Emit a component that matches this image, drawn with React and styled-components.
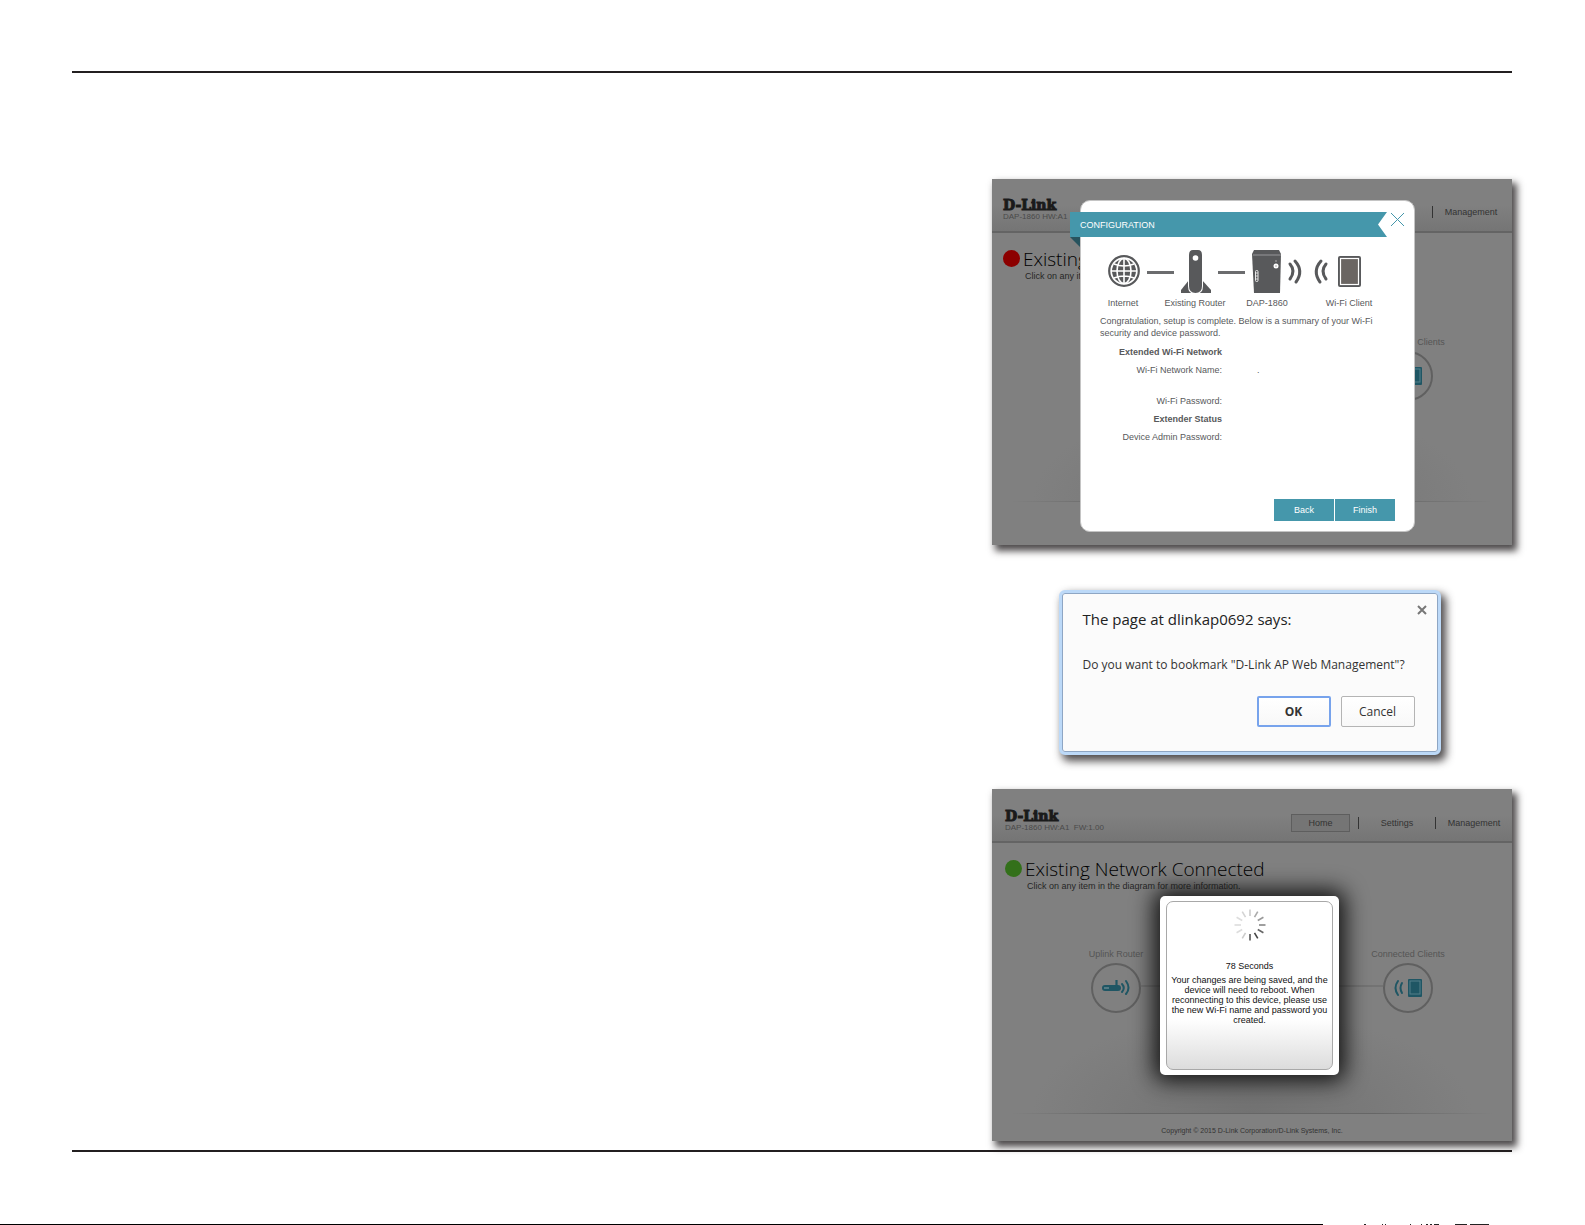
import React from "react";
import styled, { createGlobalStyle } from "styled-components";

const teal = "#4597ab";
const ui = `"Liberation Sans", Arial, sans-serif`;

const GlobalStyle = createGlobalStyle`
  *, *::before, *::after { box-sizing: border-box; }
  body { margin: 0; background: #fff; font-family: ${ui}; }
  h1, h2, p, dl, dd { margin: 0; }
  button { font: inherit; cursor: pointer; }
`;

const Page = styled.div`
  min-height: 100vh;
  display: flex;
  flex-direction: column;
`;

const Sheet = styled.main`
  margin: 71px 73px 0 72px;
  padding: 106px 0 9px;
  border-top: 2px solid #231f20;
  border-bottom: 2px solid #231f20;
  display: flex;
  flex-direction: column;
  align-items: flex-end;
`;

const Figures = styled.div`
  width: 520px;
  display: flex;
  flex-direction: column;
  align-items: center;
`;

const Screen = styled.section`
  position: relative;
  width: 100%;
  height: ${(p) => p.$height}px;
  display: flex;
  flex-direction: column;
  background: radial-gradient(ellipse 220px 100px at 50% 100%, #727272, #808080) top / 100%
    calc(100% - ${(p) => p.$footer}px) no-repeat #808080;
  box-shadow: 4px 5px 7px 1px rgba(35, 31, 32, 0.8);
  color: #333;
  font-size: 9px;
`;

const TopBar = styled.header`
  flex: none;
  height: 54px;
  padding: 0 ${(p) => p.$end}px 0 ${(p) => p.$inset}px;
  display: flex;
  justify-content: space-between;
  background: linear-gradient(#808080 50%, #757575);
  border-bottom: 2px solid #646464;
`;

const Brand = styled.div`
  padding-top: ${(p) => p.$top}px;
`;

const Logo = styled.div`
  font: bold 14px/14px "DejaVu Serif", serif;
  color: #1a1a1a;
  -webkit-text-stroke: 1px #1a1a1a;
`;

const Model = styled.div`
  font-size: 8px;
  line-height: 10px;
  color: #4a4a4a;
`;

const Nav = styled.nav`
  display: flex;
  align-items: center;
  align-self: flex-start;
  height: 18px;
  margin-top: ${(p) => p.$top}px;
`;

const NavLink = styled.a`
  width: ${(p) => p.$width}px;
  height: 18px;
  line-height: 16px;
  text-align: center;
  text-decoration: none;
  color: #333;
  border: 1px solid ${(p) => (p.$active ? "#5e5e5e" : "transparent")};
  background: ${(p) => (p.$active ? "#757575" : "transparent")};
`;

const Divider = styled.span`
  width: 1px;
  height: 12px;
  margin-left: ${(p) => p.$gap || 0}px;
  background: #333;
`;

const Heading = styled.div`
  display: grid;
  grid-template-columns: 17px 1fr;
  column-gap: 3px;
  padding: 14px 0 0 ${(p) => p.$inset}px;
`;

const Dot = styled.span`
  width: 17px;
  height: 17px;
  margin-top: 3px;
  border-radius: 50%;
  background: ${(p) => p.$color};
`;

const Title = styled.h1`
  font: 300 19px/24px "Open Sans", "Noto Sans", sans-serif;
  color: #000;
`;

const Hint = styled.p`
  grid-column: 2;
  padding-left: 2px;
  line-height: 10px;
  color: #262626;
`;

const Diagram = styled.div`
  display: flex;
  justify-content: space-between;
  margin: ${(p) => p.$top}px 67px 0 87px;
`;

const Node = styled.div`
  width: 74px;
  display: flex;
  flex-direction: column;
  align-items: center;
  gap: 3px;
  line-height: 12px;
  color: #555;
  white-space: nowrap;
`;

const Ring = styled.div`
  width: 50px;
  height: 50px;
  display: grid;
  place-items: center;
  border: 2px solid #606060;
  border-radius: 50%;
`;

const Wire = styled.div`
  flex: 1;
  height: 2px;
  margin: 37px -12px 0;
  background: #737373;
`;

const Footer = styled.footer`
  height: ${(p) => p.$height}px;
  margin: auto 20px 0;
  padding-top: 12px;
  text-align: center;
  font-size: 7px;
  line-height: 10px;
  border-top: 1px solid;
  border-image: linear-gradient(90deg, transparent, #666 25%, #666 75%, transparent) 1;
`;

const SetupDialog = styled.div`
  position: absolute;
  left: 88px;
  top: 21px;
  width: 335px;
  height: 332px;
  padding: 11px 19px 10px;
  display: flex;
  flex-direction: column;
  background: #fff;
  border: 1px solid #c4c4c4;
  border-radius: 10px;
  color: #58595b;
`;

const Ribbon = styled.h2`
  flex: none;
  width: 317px;
  height: 25px;
  margin-left: -30px;
  padding-left: 10px;
  font-size: 9px;
  font-weight: 400;
  line-height: 27px;
  color: #fff;
  background: ${teal};
  clip-path: polygon(0 0, 100% 0, calc(100% - 9px) 50%, 100% 100%, 0 100%);
`;

const Fold = styled.span`
  position: absolute;
  left: -11px;
  top: 36px;
  width: 10px;
  height: 10px;
  background: #27535e;
  clip-path: polygon(0 0, 100% 0, 100% 100%);
`;

const CloseButton = styled.button`
  position: absolute;
  top: ${(p) => p.$top}px;
  right: ${(p) => p.$right}px;
  padding: 0;
  border: 0;
  background: none;
  display: flex;
`;

const Art = styled.svg`
  display: block;
  flex: none;
`;

const Topology = styled.div`
  margin: 12px -12px 0;
  padding-left: 19px;
`;

const Captions = styled.div`
  display: grid;
  grid-template-columns: 72px 72px 72px 92px;
  margin: 2px 0 0 -20px;
  line-height: 12px;
  text-align: center;
`;

const Summary = styled.p`
  margin-top: 6px;
  line-height: 12px;
`;

const Details = styled.dl`
  display: grid;
  grid-template-columns: 122px 1fr;
  column-gap: 35px;
  margin-top: 4px;
  line-height: 18px;
`;

const Term = styled.dt`
  text-align: right;
  font-weight: ${(p) => (p.$bold ? 700 : 400)};
  margin-top: ${(p) => (p.$gap ? 13 : 0)}px;
`;

const Actions = styled.div`
  display: flex;
  justify-content: flex-end;
  gap: ${(p) => p.$gap}px;
  margin-top: auto;
`;

const TealButton = styled.button`
  width: 60px;
  height: 22px;
  padding: 0;
  border: 0;
  color: #fff;
  background: ${teal};
`;

const Alert = styled.section`
  position: relative;
  width: 382px;
  height: 165px;
  margin: 45px 5px 34px 0;
  padding: 16px 23px 25px 21px;
  display: flex;
  flex-direction: column;
  background: #fbfbfb;
  border: 3px solid #bcd9f8;
  border-radius: 6px;
  box-shadow: inset 0 0 0 1px #8ea6c4, 4px 5px 8px 1px rgba(35, 31, 32, 0.8);
  color: #333;
  font: 12px/16px "Open Sans", "Noto Sans", sans-serif;
`;

const AlertTitle = styled.h2`
  font-size: 15px;
  font-weight: 400;
  line-height: 20px;
  color: #222;
`;

const AlertText = styled.p`
  margin-top: 28px;
  white-space: nowrap;
`;

const AlertButton = styled.button`
  width: 74px;
  height: 31px;
  padding: 0;
  color: #333;
  font-weight: ${(p) => (p.$primary ? 700 : 400)};
  background: linear-gradient(#fff, #f8f8f8);
  border: ${(p) => (p.$primary ? "2px solid #77a3ec" : "1px solid #b4b4b4")};
  border-radius: 2px;
`;

const RebootPopup = styled.div`
  position: absolute;
  left: 168px;
  top: 107px;
  width: 179px;
  height: 179px;
  padding: 5px 6px;
  border-radius: 5px;
  background: #fff;
  box-shadow: 0 0 22px 6px #111;
`;

const RebootBody = styled.div`
  height: 100%;
  padding-top: 7px;
  display: flex;
  flex-direction: column;
  align-items: center;
  border: 1px solid #a8a8a8;
  border-radius: 7px;
  background: linear-gradient(#fff 70%, #dcdcdc);
  color: #111;
  line-height: 10px;
  text-align: center;
`;

const Countdown = styled.p`
  margin: 20px 0 4px;
`;

const RebootText = styled.p`
  width: 164px;
`;

const PageEdge = styled.div`
  display: flex;
  margin-top: auto;
  height: 1px;
  padding-right: 96px;
`;

const Rule = styled.span`
  flex: 1;
  background: #000;
`;

const Tick = styled.span`
  width: ${(p) => p.$width}px;
  margin-left: ${(p) => p.$gap}px;
  background: #222;
`;

const ticks = [
  [41, 2], [16, 1], [2, 1], [24, 1], [10, 1], [4, 2], [2, 2], [2, 5], [16, 12], [3, 19],
];

function Waves({ x, y, flip, color }) {
  return (
    <g
      transform={`translate(${x} ${y}) scale(${flip ? -1 : 1} 1)`}
      fill="none"
      stroke={color}
      strokeWidth="3"
      strokeLinecap="round"
    >
      <path d="M0-7Q6 0 0 8" />
      <path d="M5-10Q14 0 6 11" />
    </g>
  );
}

function TopologyArt() {
  const dark = "#58595b";
  return (
    <Art width="256" height="46" viewBox="0 0 256 46" aria-hidden="true">
      <circle cx="17" cy="22" r="14.8" fill="none" stroke={dark} strokeWidth="2.2" />
      <circle cx="17" cy="22" r="12" fill={dark} />
      <g fill="none" stroke="#fff" strokeWidth="1.6">
        <path d="M17 10V34M4 22H30M7 15Q17 19 27 15M7 29Q17 25 27 29" />
        <ellipse cx="17" cy="22" rx="7" ry="12.5" />
      </g>
      <rect x="40" y="22" width="27" height="3" fill="#6b6c6e" />
      <rect x="111" y="22" width="27" height="3" fill="#6b6c6e" />
      <path d="M82 31L74 41V44H104V41L95 31Z" fill={dark} />
      <path d="M82 7Q82 1 88.500 1Q95 1 95 7V37Q95 44 88.500 44Q82 44 82 37Z" fill={dark} stroke="#fff" strokeWidth="2" />
      <path d="M82 6Q82 1 86 1H91Q95 1 95 6V37Q95 44 88.500 44Q82 44 82 37Z" fill={dark} />
      <circle cx="88.500" cy="9" r="2.800" fill="#fff" />
      <path d="M147 1H172L174 5L173 44H147L145 5Z" fill={dark} />
      <path d="M146 6H174" stroke="#96979a" />
      <circle cx="169" cy="17" r="2.500" fill="#fff" />
      <path d="M168 17H170M169 11V13" stroke="#aaa" />
      <rect x="148.500" y="21.500" width="2.500" height="11" rx="1" fill="none" stroke="#e8e8e8" />
      <path d="M149 24H151M149 27H151M149 30H151" stroke="#ddd" />
      <Waves x={183} y={22} color={dark} />
      <Waves x={219} y={22} color={dark} flip />
      <rect x="231" y="7" width="23" height="31" rx="2" fill={dark} />
      <rect x="233.500" y="9.500" width="18" height="26" fill="#6a6562" stroke="#fff" strokeWidth="1.200" />
    </Art>
  );
}

function RouterIcon() {
  return (
    <Art width="30" height="20" viewBox="0 0 30 20" aria-hidden="true">
      <rect x="1" y="7" width="19" height="6" rx="3" fill="#1f5664" />
      <path d="M15.500 2V9" stroke="#1f5664" strokeWidth="2.200" />
      <path d="M3 10H8" stroke="#8a9ea3" />
      <g fill="none" stroke="#1f5664" strokeWidth="2" strokeLinecap="round">
        <path d="M21 6Q24.500 10 21 14" />
        <path d="M25 3Q30 10 25 16" />
      </g>
    </Art>
  );
}

function ClientIcon() {
  return (
    <Art width="30" height="20" viewBox="0 0 30 20" aria-hidden="true">
      <g fill="none" stroke="#1f5664" strokeWidth="2" strokeLinecap="round">
        <path d="M9 5Q6 10 9 15" />
        <path d="M5 3Q0 10 5 17" />
      </g>
      <rect x="15" y="1" width="14" height="18" rx="1" fill="#1f5664" />
      <rect x="17" y="3" width="10" height="13" fill="none" stroke="#557f89" />
    </Art>
  );
}

function Cross({ size, color, weight }) {
  return (
    <Art width={size} height={size} viewBox={`0 0 ${size} ${size}`} aria-hidden="true">
      <path
        d={`M1 1L${size - 1} ${size - 1}M${size - 1} 1L1 ${size - 1}`}
        stroke={color}
        strokeWidth={weight}
      />
    </Art>
  );
}

function Spinner() {
  const shades = ["#ccc", "#aaa", "#999", "#888", "#666", "#444", "#555", "#ccc", "#ddd", "#ddd", "#ddd", "#d4d4d4"];
  return (
    <Art width="32" height="32" viewBox="-16 -16 32 32" aria-hidden="true">
      {shades.map((shade, i) => (
        <path key={i} d="M0-9V-15.500" stroke={shade} strokeWidth="1.600" transform={`rotate(${i * 30})`} />
      ))}
    </Art>
  );
}

export default function App() {
  return (
    <Page>
      <GlobalStyle />
      <Sheet>
        <Figures>
          <Screen $height={366} $footer={44}>
            <TopBar $inset={11} $end={3}>
              <Brand $top={19}>
                <Logo>D-Link</Logo>
                <Model>DAP-1860 HW:A1</Model>
              </Brand>
              <Nav $top={24}>
                <Divider />
                <NavLink href="#management" $width={76}>Management</NavLink>
              </Nav>
            </TopBar>
            <Heading $inset={11}>
              <Dot $color="#8c0000" />
              <Title>Existing</Title>
              <Hint>Click on any item</Hint>
            </Heading>
            <Diagram $top={55}>
              <Node />
              <Node>
                Connected Clients
                <Ring><ClientIcon /></Ring>
              </Node>
            </Diagram>
            <Footer $height={44} />
            <SetupDialog role="dialog" aria-label="Configuration">
              <Ribbon>CONFIGURATION</Ribbon>
              <Fold />
              <CloseButton aria-label="Close" $top={11} $right={9}>
                <Cross size={15} color={teal} weight={1} />
              </CloseButton>
              <Topology>
                <TopologyArt />
                <Captions>
                  <span>Internet</span>
                  <span>Existing Router</span>
                  <span>DAP-1860</span>
                  <span>Wi-Fi Client</span>
                </Captions>
              </Topology>
              <Summary>
                Congratulation, setup is complete. Below is a summary of your Wi-Fi
                <br />
                security and device password.
              </Summary>
              <Details>
                <Term $bold>Extended Wi-Fi Network</Term>
                <dd />
                <Term>Wi-Fi Network Name:</Term>
                <dd>.</dd>
                <Term $gap>Wi-Fi Password:</Term>
                <dd />
                <Term $bold>Extender Status</Term>
                <dd />
                <Term>Device Admin Password:</Term>
                <dd />
              </Details>
              <Actions $gap={1}>
                <TealButton>Back</TealButton>
                <TealButton>Finish</TealButton>
              </Actions>
            </SetupDialog>
          </Screen>

          <Alert role="alertdialog">
            <AlertTitle>The page at dlinkap0692 says:</AlertTitle>
            <CloseButton aria-label="Close" $top={12} $right={11}>
              <Cross size={10} color="#777" weight={2} />
            </CloseButton>
            <AlertText>Do you want to bookmark "D-Link AP Web Management"?</AlertText>
            <Actions $gap={10}>
              <AlertButton $primary>OK</AlertButton>
              <AlertButton>Cancel</AlertButton>
            </Actions>
          </Alert>

          <Screen $height={352} $footer={28}>
            <TopBar $inset={13} $end={0}>
              <Brand $top={20}>
                <Logo>D-Link</Logo>
                <Model>DAP-1860 HW:A1 &nbsp;FW:1.00</Model>
              </Brand>
              <Nav $top={25}>
                <NavLink href="#home" $width={59} $active>Home</NavLink>
                <Divider $gap={8} />
                <NavLink href="#settings" $width={76}>Settings</NavLink>
                <Divider />
                <NavLink href="#management" $width={76}>Management</NavLink>
              </Nav>
            </TopBar>
            <Heading $inset={13}>
              <Dot $color="#33701a" />
              <Title>Existing Network Connected</Title>
              <Hint>Click on any item in the diagram for more information.</Hint>
            </Heading>
            <Diagram $top={57}>
              <Node>
                Uplink Router
                <Ring><RouterIcon /></Ring>
              </Node>
              <Wire />
              <Node>
                Connected Clients
                <Ring><ClientIcon /></Ring>
              </Node>
            </Diagram>
            <Footer $height={28}>Copyright © 2015 D-Link Corporation/D-Link Systems, Inc.</Footer>
            <RebootPopup role="dialog" aria-label="Rebooting">
              <RebootBody>
                <Spinner />
                <Countdown>78 Seconds</Countdown>
                <RebootText>
                  Your changes are being saved, and the device will need to reboot. When
                  reconnecting to this device, please use the new Wi-Fi name and password you created.
                </RebootText>
              </RebootBody>
            </RebootPopup>
          </Screen>
        </Figures>
      </Sheet>
      <PageEdge>
        <Rule />
        {ticks.map(([gap, width], i) => (
          <Tick key={i} $gap={gap} $width={width} />
        ))}
      </PageEdge>
    </Page>
  );
}
